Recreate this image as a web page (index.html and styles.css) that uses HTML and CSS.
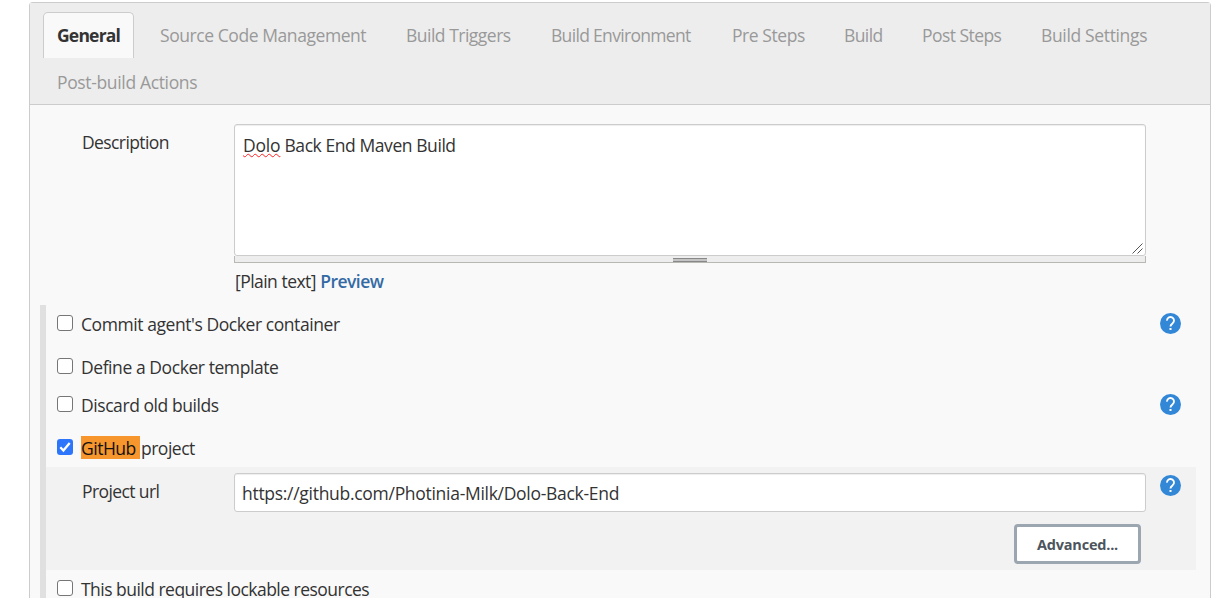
FILE: index.html
```html
<!DOCTYPE html>
<html lang="en">
<head>
<meta charset="utf-8">
<title>Project configuration</title>
<link rel="stylesheet" href="styles.css">
</head>
<body>
<svg class="sprite" width="0" height="0" aria-hidden="true">
  <symbol id="help" viewBox="0 0 21 21">
    <circle cx="10.5" cy="10.5" r="10.5" fill="#3387d7"/>
    <path d="M7 7.600a3.500 3.500 0 1 1 5.600 2.700c-1.200.9-2.100 1.500-2.100 3.200" fill="none" stroke="#fff" stroke-width="1.9"/>
    <rect x="9.5" y="15" width="2" height="2" fill="#fff"/>
  </symbol>
</svg>
<main class="panel">
  <nav class="tabs">
    <a class="tab active"><span>General</span></a>
    <a class="tab scm"><span>Source Code Management</span></a>
    <a class="tab triggers"><span>Build Triggers</span></a>
    <a class="tab environment"><span>Build Environment</span></a>
    <a class="tab pre"><span>Pre Steps</span></a>
    <a class="tab build"><span>Build</span></a>
    <a class="tab post"><span>Post Steps</span></a>
    <a class="tab settings"><span>Build Settings</span></a>
    <a class="tab actions"><span>Post-build Actions</span></a>
  </nav>
  <section class="description">
    <div class="field-label">Description</div>
    <div class="field">
      <div class="textarea"><span class="misspelled">Dolo</span> Back End Maven Build
        <svg class="resizer" width="11" height="11" viewBox="0 0 11 11"><path d="M.5 10.500l10-10M5.500 10.500l5-5" stroke="#555" fill="none"/></svg>
      </div>
      <div class="grip"><i></i></div>
      <div class="hint">[Plain text] <a class="preview">Preview</a></div>
    </div>
  </section>
  <section class="options">
    <div class="row tall"><i class="check"></i><span>Commit agent's Docker container</span><svg class="help"><use href="#help"/></svg></div>
    <div class="row"><i class="check"></i><span>Define a Docker template</span></div>
    <div class="row tall"><i class="check"></i><span>Discard old builds</span><svg class="help"><use href="#help"/></svg></div>
    <div class="row"><i class="check checked"><svg width="16" height="16" viewBox="0 0 16 16"><path d="M3.300 8.300l3.100 3.200 6.300-7.600" fill="none" stroke="#fff" stroke-width="2.300"/></svg></i><span class="github"><mark>GitHub </mark>project</span></div>
    <div class="nested">
      <div class="url-row">
        <div class="url-label">Project url</div>
        <div class="input">https://github.com/Photinia-Milk/Dolo-Back-End</div>
        <svg class="help"><use href="#help"/></svg>
      </div>
      <div class="actions-row"><button class="button">Advanced...</button></div>
    </div>
    <div class="row last"><i class="check"></i><span class="lockable">This build requires lockable resources</span></div>
  </section>
</main>
</body>
</html>
```

FILE: styles.css
```css
* { box-sizing: border-box; }
body {
  margin: 0;
  height: 598px;
  overflow: hidden;
  background: #fff;
  color: #333;
  font: 17.5px/24px "Open Sans", "Noto Sans", sans-serif;
  letter-spacing: -0.43px;
  white-space: nowrap;
}
.sprite { position: absolute; }
.panel {
  width: 1182px;
  height: 596px;
  margin: 2px 0 0 29px;
  border: 1px solid #ccc;
  border-bottom: 0;
  border-radius: 4px 4px 0 0;
  background: #f9f9f9;
}
.tabs {
  display: flex;
  flex-wrap: wrap;
  align-content: flex-start;
  height: 102px;
  padding: 9px 13px 0;
  border-bottom: 1px solid #ccc;
  background: #ededed;
  color: #999;
}
.tab { height: 47px; padding: 11px 0 0 20px; }
.tab.active {
  width: 91px;
  height: 46px;
  margin-right: 6px;
  padding: 10px 0 0 13px;
  border: 1px solid #ccc;
  border-bottom: 0;
  border-radius: 5px 5px 0 0;
  background: #f9f9f9;
  color: #333;
  font-weight: 700;
  letter-spacing: -0.8px;
}
.scm { width: 246px; }
.triggers { width: 145px; letter-spacing: -0.5px; }
.environment { width: 181px; letter-spacing: -0.68px; }
.pre { width: 112px; }
.build { width: 78px; letter-spacing: -0.6px; }
.post { width: 119px; letter-spacing: -0.55px; }
.settings { width: 140px; letter-spacing: -0.35px; }
.actions { padding-left: 14px; letter-spacing: -0.35px; }

.description { display: flex; height: 200px; padding: 19px 64px 0 52px; }
.field-label { width: 152px; padding-top: 6px; letter-spacing: -0.6px; }
.field { flex: 1; }
.textarea {
  position: relative;
  height: 132px;
  padding: 8px;
  border: 1px solid #ccc;
  border-radius: 3px;
  background: #fff;
  box-shadow: inset 0 1px 1px rgba(0, 0, 0, .07);
}
.misspelled {
  text-decoration: underline wavy #f22 1px;
  text-underline-offset: 1px;
  text-decoration-skip-ink: none;
  letter-spacing: -0.2px;
}
.resizer { position: absolute; right: 2px; bottom: 1px; }
.grip {
  display: flex;
  justify-content: center;
  height: 7px;
  padding-top: 2px;
  border: 1px solid #b9b9b4;
  border-top: 0;
  background: #ededed;
}
.grip i { width: 34px; height: 4px; border: solid #888; border-width: 1px 0; background: #c4c4c4; }
.hint { padding: 6px 0 0 1px; letter-spacing: -0.55px; word-spacing: 0.3px; }
.preview { color: #346aa4; font-weight: 600; }

.options { height: 293px; overflow: hidden; margin-left: 10px; border-left: 6px solid #e0e0e0; }
.row { display: flex; height: 38px; padding: 8px 29px 0 11px; }
.row.tall { height: 43px; }
.row.last { height: 28px; }
.row > span { margin: -1px 0 0 8px; }
.check {
  width: 16px;
  height: 16px;
  margin-top: 2px;
  border: 1px solid #767676;
  border-radius: 3px;
  background: #fff;
}
.check.checked { border: 0; background: #2d76fb; }
.check svg { display: block; }
.github { letter-spacing: -0.5px; }
.lockable { letter-spacing: -0.52px; }
mark { display: inline-block; width: 59px; height: 23px; line-height: 24px; margin-right: 1px; background: #f7962d; color: #111; white-space: pre; }
.help { width: 21px; height: 21px; margin-left: auto; flex: none; }
.nested {
  position: relative;
  height: 103px;
  width: 1150px;
  padding: 6px 15px 0 36px;
  background: rgba(0, 0, 0, .027);
}
.url-row { display: flex; }
.url-label { width: 152px; padding-top: 6px; letter-spacing: -0.6px; }
.input {
  width: 912px;
  height: 39px;
  padding: 7px;
  border: 1px solid #ccc;
  border-radius: 3px;
  background: #fff;
  box-shadow: inset 0 1px 1px rgba(0, 0, 0, .07);
  letter-spacing: -0.29px;
}
.url-row .help { margin-top: 2px; }
.actions-row { display: flex; justify-content: flex-end; padding: 12px 40px 0 0; }
.button {
  width: 127px;
  height: 40px;
  padding: 1px 0 0;
  border: 3px solid #9ba6b0;
  border-radius: 4px;
  background: #fff;
  color: #4d545d;
  font: 700 14.5px/20px "Open Sans", sans-serif;
  letter-spacing: -0.2px;
}
```
